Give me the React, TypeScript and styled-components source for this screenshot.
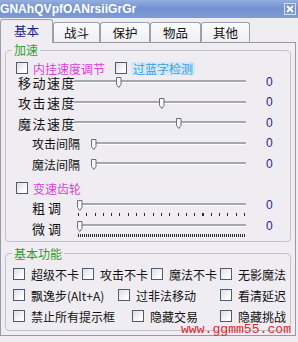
import styled, { createGlobalStyle } from "styled-components";

const GlobalStyle = createGlobalStyle`
  html, body {
    margin: 0;
    padding: 0;
    background: #efedf1;
  }
  body {
    font-family: "Noto Sans CJK SC", "Noto Sans", sans-serif;
    font-size: 12px;
    color: #111;
  }
`;

const tabs = ["基本", "战斗", "保护", "物品", "其他"];
const tabWidths = [53, 47, 50, 51, 49];

const speedRows = [
  { label: "移动速度", pos: 0.25 },
  { label: "攻击速度", pos: 0.5 },
  { label: "魔法速度", pos: 0.6 },
];
const intervalRows = ["攻击间隔", "魔法间隔"];

const basicRows = [
  [
    { label: "超级不卡", width: 69 },
    { label: "攻击不卡", width: 69 },
    { label: "魔法不卡", width: 69 },
    { label: "无影魔法" },
  ],
  [
    { label: "飘逸步(Alt+A)", width: 105 },
    { label: "过非法移动", width: 102 },
    { label: "看清延迟" },
  ],
  [
    { label: "禁止所有提示框", width: 119 },
    { label: "隐藏交易", width: 88 },
    { label: "隐藏挑战" },
  ],
];

const Thumb = () => (
  <S.Thumb width="6" height="11" viewBox="0 0 6 11">
    <path d="M0.5 0.5 H5 V7.5 L2.8 10.5 L0.5 7.5 Z" fill="#f7f7f7" stroke="#6d6f78" />
  </S.Thumb>
);

type SliderProps = { pos: number; ticks?: "coarse" | "fine" };
const Slider = ({ pos, ticks }: SliderProps) => (
  <S.Slider>
    <S.Track $top={ticks ? 6 : 5}>
      <div style={{ position: "absolute", left: `calc(${pos * 100}% - 1px)`, top: -3 }}>
        <Thumb />
      </div>
    </S.Track>
    {ticks && <S.Ticks $fine={ticks === "fine"} />}
  </S.Slider>
);

const App = () => {
  return (
    <>
      <GlobalStyle />
      <S.Window>
        <S.TitleBar>
          <S.Title>GNAhQVpfOANrsiiGrGr</S.Title>
          <S.Close>
            <svg width="8" height="8" viewBox="0 0 8 8">
              <path d="M1 1 L7 7 M7 1 L1 7" stroke="#fff" strokeWidth="1.8" />
            </svg>
          </S.Close>
        </S.TitleBar>

        <S.TabStrip>
          {tabs.map((t, i) => (
            <S.Tab key={t} $active={i === 0} $width={tabWidths[i]}>
              {t}
            </S.Tab>
          ))}
        </S.TabStrip>

        <S.Panel>
          <S.Group>
            <S.Legend>加速</S.Legend>
            <S.CheckLine>
              <S.Option $width={99} $gap={5}>
                <S.Box />
                <S.Label $color="#dc3fdc">内挂速度调节</S.Label>
              </S.Option>
              <S.Option $gap={4}>
                <S.Box />
                <S.Label $color="#3a9ee0" $highlight>
                  过蓝字检测
                </S.Label>
              </S.Option>
            </S.CheckLine>

            <S.SliderStack>
              {speedRows.map((r) => (
                <S.SliderRow key={r.label} $indent={12}>
                  <S.RowLabel $width={56} $size={13} $spacing={1.5}>
                    {r.label}
                  </S.RowLabel>
                  <Slider pos={r.pos} />
                  <S.Value>0</S.Value>
                </S.SliderRow>
              ))}
              {intervalRows.map((l) => (
                <S.SliderRow key={l} $indent={26}>
                  <S.RowLabel $width={60} $size={12}>
                    {l}
                  </S.RowLabel>
                  <Slider pos={0} />
                  <S.Value>0</S.Value>
                </S.SliderRow>
              ))}
            </S.SliderStack>

            <S.CheckLine $top={10}>
              <S.Option $gap={5}>
                <S.Box />
                <S.Label $color="#dc3fdc">变速齿轮</S.Label>
              </S.Option>
            </S.CheckLine>

            <S.TickStack>
              <S.SliderRow $indent={26} $tall>
                <S.RowLabel $width={45} $size={13}>
                  粗 调
                </S.RowLabel>
                <Slider pos={0.005} ticks="coarse" />
                <S.Value $raise>0</S.Value>
              </S.SliderRow>
              <S.SliderRow $indent={26} $tall>
                <S.RowLabel $width={45} $size={13}>
                  微 调
                </S.RowLabel>
                <Slider pos={0.005} ticks="fine" />
                <S.Value $raise>0</S.Value>
              </S.SliderRow>
            </S.TickStack>
          </S.Group>

          <S.Group $second>
            <S.Legend>基本功能</S.Legend>
            {basicRows.map((row, i) => (
              <S.OptionRow key={i}>
                {row.map((o) => (
                  <S.Option key={o.label} $width={o.width} $gap={6}>
                    <S.Box />
                    <S.Label>{o.label}</S.Label>
                  </S.Option>
                ))}
              </S.OptionRow>
            ))}
          </S.Group>
        </S.Panel>

        <S.Watermark>www.ggmm55.com</S.Watermark>
      </S.Window>
    </>
  );
};

export default App;

const S = {
  Window: styled.div`
    position: relative;
    width: 298px;
    height: 342px;
    overflow: hidden;
    background: #efedf1;
  `,
  TitleBar: styled.div`
    display: flex;
    align-items: center;
    justify-content: space-between;
    height: 18px;
    padding: 0 2px 0 0;
    background: linear-gradient(to bottom, #95aee0 0%, #7392d0 45%, #7e9bd6 100%);
  `,
  Title: styled.span`
    font-family: "Liberation Sans", Arial, sans-serif;
    font-weight: bold;
    font-size: 12px;
    line-height: 18px;
    color: #fff;
    letter-spacing: 0.05px;
  `,
  Close: styled.span`
    display: flex;
    align-items: center;
    justify-content: center;
    width: 12px;
    height: 12px;
    box-sizing: border-box;
    border: 1px solid #d6e0f2;
    background: #7897d3;
  `,
  TabStrip: styled.div`
    display: flex;
    align-items: flex-end;
    height: 24px;
  `,
  Tab: styled.div<{ $active?: boolean; $width: number }>`
    position: relative;
    z-index: 1;
    box-sizing: border-box;
    width: ${(p) => p.$width}px;
    height: ${(p) => (p.$active ? 24 : 20)}px;
    margin-bottom: ${(p) => (p.$active ? -1 : 0)}px;
    display: flex;
    align-items: center;
    justify-content: center;
    padding-bottom: ${(p) => (p.$active ? 2 : 0)}px;
    border: 1px solid #9ba1ab;
    border-bottom: none;
    border-radius: 3px 3px 0 0;
    background: ${(p) =>
      p.$active ? "#efedf1" : "linear-gradient(to bottom, #fcfcfd, #efeef1)"};
    color: ${(p) => (p.$active ? "#1d238e" : "#111")};
    font-size: 12.5px;
    line-height: 14px;
  `,
  Panel: styled.div`
    box-sizing: border-box;
    width: 296px;
    height: 294px;
    border: 1px solid #949aa6;
    padding: 0 4px;
  `,
  Group: styled.fieldset<{ $second?: boolean }>`
    box-sizing: border-box;
    min-inline-size: 0;
    width: 286px;
    margin: ${(p) => (p.$second ? 5 : 0)}px 0 0 0;
    padding: 0 0 ${(p) => (p.$second ? 3 : 2)}px 0;
    border: 1px solid #c3c2ca;
    border-radius: 4px;
  `,
  Legend: styled.legend`
    margin-left: 6px;
    padding: 0 2px;
    font-size: 12px;
    line-height: 14px;
    color: #2f9d2f;
  `,
  CheckLine: styled.div<{ $top?: number }>`
    display: flex;
    align-items: center;
    height: 14px;
    margin-top: ${(p) => p.$top ?? 4}px;
    padding-left: 10px;
  `,
  Option: styled.label<{ $width?: number; $gap: number }>`
    display: flex;
    align-items: center;
    gap: ${(p) => p.$gap}px;
    width: ${(p) => (p.$width ? `${p.$width}px` : "auto")};
    flex: none;
    white-space: nowrap;
  `,
  Box: styled.span`
    display: block;
    box-sizing: border-box;
    width: 12px;
    height: 12px;
    border: 1px solid #4f5b72;
    background: linear-gradient(135deg, #dedde3, #ffffff 80%);
  `,
  Label: styled.span<{ $color?: string; $highlight?: boolean }>`
    font-size: 12px;
    line-height: 13px;
    color: ${(p) => p.$color ?? "#111"};
    background: ${(p) => (p.$highlight ? "#d3e9f8" : "transparent")};
    padding: 0 ${(p) => (p.$highlight ? 2 : 0)}px;
  `,
  SliderStack: styled.div`
    display: flex;
    flex-direction: column;
    gap: 6.5px;
  `,
  TickStack: styled.div`
    display: flex;
    flex-direction: column;
    margin-top: 1.5px;
  `,
  SliderRow: styled.div<{ $indent: number; $tall?: boolean }>`
    display: flex;
    align-items: stretch;
    height: ${(p) => (p.$tall ? 21 : 14)}px;
    padding-left: ${(p) => p.$indent}px;
  `,
  RowLabel: styled.span<{ $width: number; $size: number; $spacing?: number }>`
    align-self: center;
    flex: none;
    width: ${(p) => p.$width}px;
    font-size: ${(p) => p.$size}px;
    letter-spacing: ${(p) => p.$spacing ?? 0}px;
    line-height: 13px;
    white-space: pre;
  `,
  Slider: styled.div`
    flex: 1;
    display: flex;
    flex-direction: column;
  `,
  Track: styled.div<{ $top: number }>`
    position: relative;
    height: 2px;
    margin-top: ${(p) => p.$top}px;
    background: #a3a7b2;
    border-bottom: 1px solid #ffffff;
    border-radius: 1px;
  `,
  Thumb: styled.svg`
    display: block;
  `,
  Ticks: styled.div<{ $fine: boolean }>`
    height: 3px;
    margin: 7px 1px 0 1px;
    background: ${(p) =>
      p.$fine
        ? "repeating-linear-gradient(to right, #2a2a2a 0 1px, transparent 1px 2px)"
        : "repeating-linear-gradient(to right, #2a2a2a 0 1px, transparent 1px 8.3px)"};
  `,
  Value: styled.span<{ $raise?: boolean }>`
    align-self: center;
    flex: none;
    box-sizing: border-box;
    width: 44px;
    padding-left: 20px;
    margin-bottom: ${(p) => (p.$raise ? 4 : 0)}px;
    font-family: "Liberation Sans", Arial, sans-serif;
    font-size: 12px;
    line-height: 13px;
    color: #1e1f96;
  `,
  OptionRow: styled.div`
    display: flex;
    align-items: center;
    height: 21px;
    padding-left: 7px;
    &:first-of-type {
      margin-top: 3px;
    }
  `,
  Watermark: styled.span`
    position: absolute;
    left: 181px;
    top: 324px;
    font-family: "Liberation Mono", "Courier New", monospace;
    font-size: 13.1px;
    line-height: 12px;
    color: #dd2a2a;
  `,
};
